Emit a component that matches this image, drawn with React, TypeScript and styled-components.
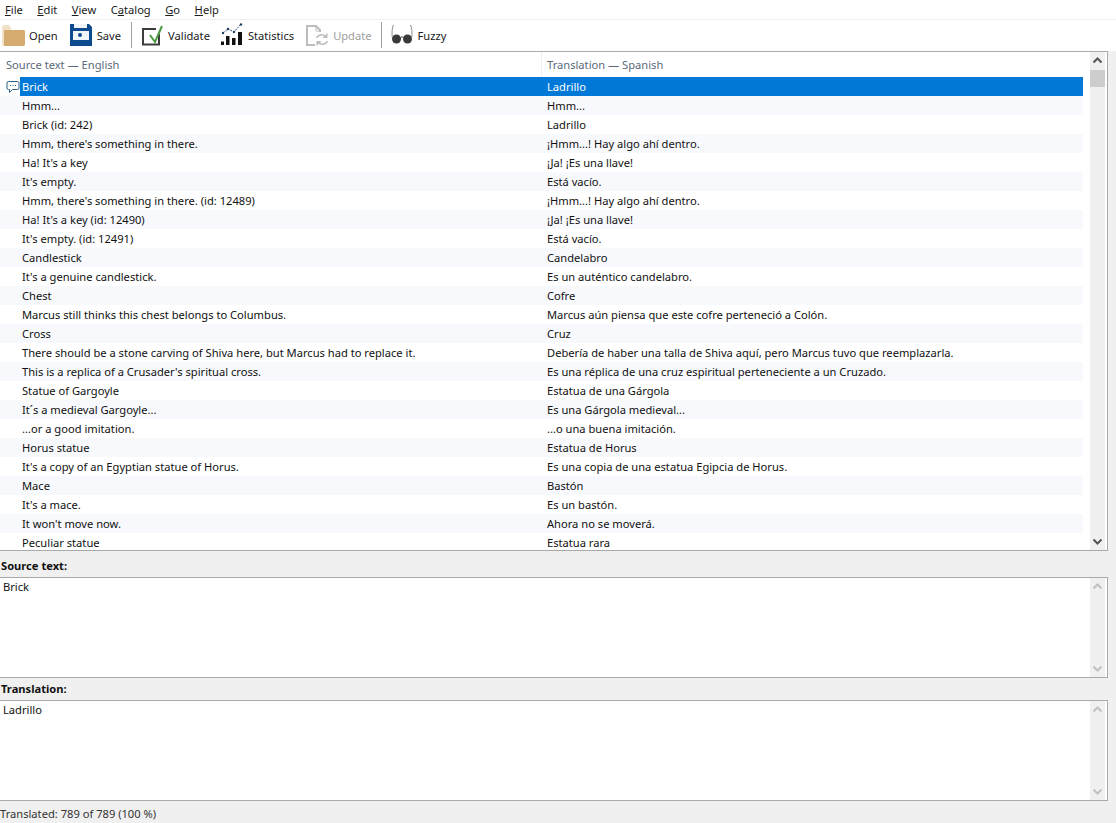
import styled, { createGlobalStyle } from "styled-components";

const GlobalStyle = createGlobalStyle`
  html, body {
    margin: 0;
    padding: 0;
    height: 100%;
    background: #f0f0f0;
  }
  #root {
    height: 100%;
  }
`;

const rows: [string, string][] = [
  ["Brick", "Ladrillo"],
  ["Hmm...", "Hmm..."],
  ["Brick (id: 242)", "Ladrillo"],
  ["Hmm, there's something in there.", "¡Hmm...! Hay algo ahí dentro."],
  ["Ha! It's a key", "¡Ja! ¡Es una llave!"],
  ["It's empty.", "Está vacío."],
  ["Hmm, there's something in there. (id: 12489)", "¡Hmm...! Hay algo ahí dentro."],
  ["Ha! It's a key (id: 12490)", "¡Ja! ¡Es una llave!"],
  ["It's empty. (id: 12491)", "Está vacío."],
  ["Candlestick", "Candelabro"],
  ["It's a genuine candlestick.", "Es un auténtico candelabro."],
  ["Chest", "Cofre"],
  ["Marcus still thinks this chest belongs to Columbus.", "Marcus aún piensa que este cofre perteneció a Colón."],
  ["Cross", "Cruz"],
  ["There should be a stone carving of Shiva here, but Marcus had to replace it.", "Debería de haber una talla de Shiva aquí, pero Marcus tuvo que reemplazarla."],
  ["This is a replica of a Crusader's spiritual cross.", "Es una réplica de una cruz espiritual perteneciente a un Cruzado."],
  ["Statue of Gargoyle", "Estatua de una Gárgola"],
  ["It´s a medieval Gargoyle...", "Es una Gárgola medieval..."],
  ["...or a good imitation.", "...o una buena imitación."],
  ["Horus statue", "Estatua de Horus"],
  ["It's a copy of an Egyptian statue of Horus.", "Es una copia de una estatua Egipcia de Horus."],
  ["Mace", "Bastón"],
  ["It's a mace.", "Es un bastón."],
  ["It won't move now.", "Ahora no se moverá."],
  ["Peculiar statue", "Estatua rara"],
];

const Window = styled.div`
  display: flex;
  flex-direction: column;
  width: 1116px;
  height: 823px;
  overflow: hidden;
  background: #f0f0f0;
  color: #111;
  font-family: "Noto Sans", "Open Sans", sans-serif;
  font-size: 11.15px;

  & > * {
    flex: none;
  }
`;

const MenuBar = styled.div`
  display: flex;
  gap: 14.5px;
  height: 19px;
  padding-left: 5px;
  background: #fff;
  line-height: 20px;
  border-bottom: 1px solid #f0f0f0;
`;

const MenuItem = styled.span`
  color: #1a1a1a;
`;

const Key = styled.span`
  text-decoration: underline;
`;

const Toolbar = styled.div`
  display: flex;
  align-items: center;
  height: 30px;
  padding: 0 0 1px 1px;
  background: #fff;
`;

const ToolButton = styled.div<{ $off?: boolean; $tight?: boolean }>`
  display: flex;
  align-items: center;
  gap: 4px;
  margin-right: ${({ $tight }) => ($tight ? 10 : 11)}px;
  color: ${({ $off }) => ($off ? "#a0a0a0" : "#1a1a1a")};
`;

const ToolSep = styled.div`
  width: 1px;
  height: 26px;
  background: #a0a0a0;
  margin: 0 9px 0 -1px;
`;

const Panel = styled.div`
  display: flex;
  width: 1107px;
  background: #fff;
  border: 1px solid #a9a9a9;
  border-left: none;
`;

const ListPanel = styled(Panel)`
  height: 498px;
`;

const ListBody = styled.div`
  flex: 1;
  min-width: 0;
  overflow: hidden;
`;

const HeaderRow = styled.div`
  display: grid;
  grid-template-columns: 541px 1fr;
  height: 25px;
  line-height: 26px;
  color: #5a6a7a;
`;

const HeaderCell = styled.div`
  padding-left: 6px;

  & + & {
    border-left: 1px solid #eceef2;
    padding-left: 5px;
  }
`;

const Row = styled.div<{ $stripe: boolean }>`
  position: relative;
  display: grid;
  grid-template-columns: 547px 1fr;
  grid-template-rows: 19px;
  width: 1083px;
  height: 19px;
  line-height: 20px;
  white-space: nowrap;
  background: ${({ $stripe }) => ($stripe ? "#f8f9fd" : "#fff")};
`;

const SelectedRow = styled(Row)`
  color: #fff;
  background: linear-gradient(90deg, #fff 0 20px, #0078d7 20px);
`;

const Cell = styled.div`
  overflow: hidden;

  &:first-of-type {
    padding-left: 22px;
  }
`;

const CommentMark = styled.svg`
  position: absolute;
  left: 6px;
  top: 3px;
`;

const Scroll = styled.div<{ $dim?: boolean }>`
  position: relative;
  flex: none;
  width: 15px;
  margin-left: auto;
  margin-right: 2px;
  background: #f0f0f0;
  display: flex;
  flex-direction: column;
  justify-content: space-between;
  align-items: center;
  color: ${({ $dim }) => ($dim ? "#c0c0c0" : "#555")};
`;

const Thumb = styled.div`
  position: absolute;
  top: 18px;
  left: 0;
  width: 15px;
  height: 17px;
  background: #cdcdcd;
`;

const Arrow = styled.svg`
  display: block;
  width: 15px;
  height: 17px;
`;

const FieldLabel = styled.div<{ $tall?: boolean }>`
  height: ${({ $tall }) => ($tall ? 26 : 22)}px;
  line-height: ${({ $tall }) => ($tall ? 30 : 22)}px;
  padding-left: 1px;
  font-weight: 700;
  color: #111;
`;

const Field = styled(Panel)`
  height: 99px;
`;

const FieldText = styled.div`
  flex: 1;
  padding: 0 3px;
  line-height: 18px;
`;

const Status = styled.div`
  height: 22px;
  line-height: 26px;
  color: #333;
`;

function ArrowIcon({ up }: { up?: boolean }) {
  return (
    <Arrow viewBox="0 0 15 17">
      <path
        d={up ? "M3.5 10.5 7.5 6.5 11.5 10.5" : "M3.5 6.5 7.5 10.5 11.5 6.5"}
        fill="none"
        stroke="currentColor"
        strokeWidth="2"
      />
    </Arrow>
  );
}

function ScrollBar({ dim, thumb }: { dim?: boolean; thumb?: boolean }) {
  return (
    <Scroll $dim={dim}>
      <ArrowIcon up />
      {thumb && <Thumb />}
      <ArrowIcon />
    </Scroll>
  );
}

function FolderIcon() {
  return (
    <svg width="24" height="24" viewBox="0 0 24 24">
      <path d="M1 4C1 3 2 2 3 2h5l2 3v18H3c-1 0-2-1-2-2z" fill="#f0e2c8" />
      <path d="M4 23c-1 0-1.500-.5-1-1.500V8.500C3 7.500 3.500 7 4.500 7H22.500c.8 0 1.500.6 1.500 1.500V21c0 1-.7 2-1.500 2z" fill="#d6ab70" />
    </svg>
  );
}

function SaveIcon() {
  return (
    <svg width="24" height="24" viewBox="0 0 24 24">
      <path d="M1 1h19l3 3v19H1z" fill="#0e4a8e" />
      <rect x="5" y="1" width="13" height="4" fill="#f2f5f9" />
      <rect x="4" y="8" width="16" height="9" fill="#f2f5f9" />
      <circle cx="11" cy="12" r="2" fill="#0e4a8e" />
    </svg>
  );
}

function ValidateIcon() {
  return (
    <svg width="23" height="24" viewBox="0 0 23 24">
      <path d="M18 11V21.500H2V6H15" fill="none" stroke="#3c3c3c" strokeWidth="2" />
      <path d="M9 12l5 7L21 3" fill="none" stroke="#4f9a45" strokeWidth="2" />
    </svg>
  );
}

function StatsIcon() {
  return (
    <svg width="24" height="24" viewBox="0 0 24 24">
      <path d="M1 22v-3.500h3V22zM6 22v-9h3.500v9zM12 22v-7h3.500v7zM18 22V9h4v13z" fill="#111" />
      <path d="M3 10l5-4 6 3L21 1" fill="none" stroke="#2f4f6f" strokeWidth="1" strokeDasharray="2 1" />
      <circle cx="3" cy="10" r="1.200" fill="#1f3f5f" />
      <circle cx="8" cy="6" r="1.200" fill="#1f3f5f" />
      <circle cx="14" cy="9" r="1.200" fill="#1f3f5f" />
      <circle cx="21" cy="1.500" r="1.200" fill="#1f3f5f" />
    </svg>
  );
}

function UpdateIcon() {
  return (
    <svg width="24" height="24" viewBox="0 0 24 24">
      <path d="M10 22H2V3h9l4 4v2" fill="none" stroke="#bcbcbc" strokeWidth="2" />
      <path d="M11 3v5h5" fill="none" stroke="#bcbcbc" strokeWidth="1" />
      <path d="M11.500 15c1-3 6-4.500 9-1.500" fill="none" stroke="#bcbcbc" strokeWidth="1.500" />
      <path d="M22.500 18c-1 3-6 4.500-9 1.500" fill="none" stroke="#bcbcbc" strokeWidth="1.500" />
      <path d="M22.500 10v5h-5zM11.500 23v-5h5z" fill="#bcbcbc" />
    </svg>
  );
}

function GlassesIcon() {
  return (
    <svg width="23" height="24" viewBox="0 0 23 24">
      <path d="M2.500 2C1 5 .8 10 1.200 14M19.500 2c1.500 3 1.700 8 1.300 12" fill="none" stroke="#8c8c8c" strokeWidth="1" />
      <circle cx="5.500" cy="16" r="4.500" fill="#3a3a3a" />
      <circle cx="16.500" cy="16" r="4.500" fill="#3a3a3a" />
      <path d="M9.500 14.500c1-.8 2-.8 3 0" fill="none" stroke="#3a3a3a" strokeWidth="1" />
    </svg>
  );
}

function CommentIcon() {
  return (
    <CommentMark width="14" height="14" viewBox="0 0 14 14">
      <path d="M2.500 1.500h9A1.500 1.500 0 0 1 13 3v5a1.500 1.500 0 0 1-1.500 1.500H6.500l-3 3v-3h-1A1.500 1.500 0 0 1 1 8V3a1.500 1.500 0 0 1 1.500-1.500z" fill="#fff" stroke="#2c5f85" />
      <path d="M4 5.500h1M6.500 5.500h1M9 5.500h1" stroke="#2c5f85" />
    </CommentMark>
  );
}

export default function App() {
  return (
    <Window>
      <GlobalStyle />
      <MenuBar>
        <MenuItem><Key>F</Key>ile</MenuItem>
        <MenuItem><Key>E</Key>dit</MenuItem>
        <MenuItem><Key>V</Key>iew</MenuItem>
        <MenuItem>C<Key>a</Key>talog</MenuItem>
        <MenuItem><Key>G</Key>o</MenuItem>
        <MenuItem><Key>H</Key>elp</MenuItem>
      </MenuBar>
      <Toolbar>
        <ToolButton><FolderIcon />Open</ToolButton>
        <ToolButton><SaveIcon />Save</ToolButton>
        <ToolSep />
        <ToolButton $tight><ValidateIcon />Validate</ToolButton>
        <ToolButton><StatsIcon />Statistics</ToolButton>
        <ToolButton $off $tight><UpdateIcon />Update</ToolButton>
        <ToolSep />
        <ToolButton><GlassesIcon />Fuzzy</ToolButton>
      </Toolbar>
      <ListPanel>
        <ListBody>
          <HeaderRow>
            <HeaderCell>Source text — English</HeaderCell>
            <HeaderCell>Translation — Spanish</HeaderCell>
          </HeaderRow>
          {rows.map(([source, target], i) => {
            const RowKind = i === 0 ? SelectedRow : Row;
            return (
              <RowKind key={i} $stripe={i % 2 === 1}>
                {i === 0 && <CommentIcon />}
                <Cell>{source}</Cell>
                <Cell>{target}</Cell>
              </RowKind>
            );
          })}
        </ListBody>
        <ScrollBar thumb />
      </ListPanel>
      <FieldLabel $tall>Source text:</FieldLabel>
      <Field>
        <FieldText>Brick</FieldText>
        <ScrollBar dim />
      </Field>
      <FieldLabel>Translation:</FieldLabel>
      <Field>
        <FieldText>Ladrillo</FieldText>
        <ScrollBar dim />
      </Field>
      <Status>Translated: 789 of 789 (100 %)</Status>
    </Window>
  );
}
